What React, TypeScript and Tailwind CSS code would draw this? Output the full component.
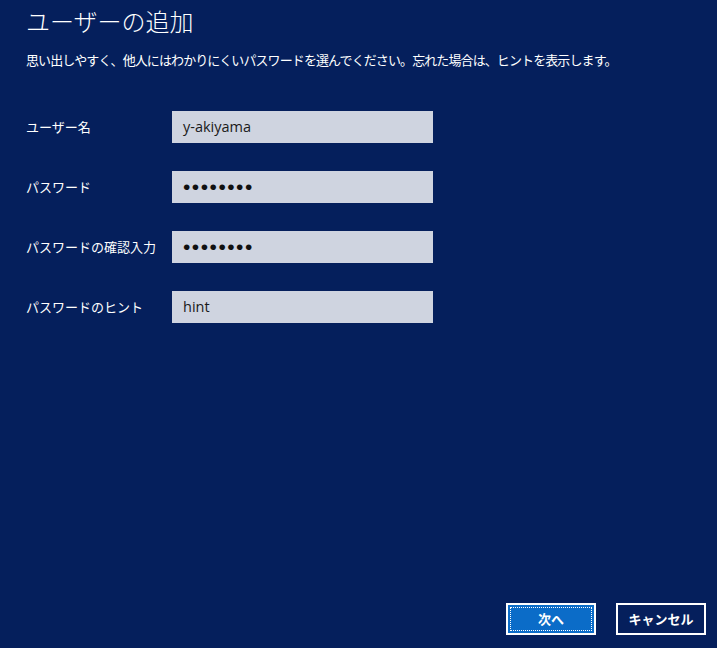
import React from 'react';

const fields = [
    { label: 'ユーザー名', value: 'y-akiyama', secret: false },
    { label: 'パスワード', value: 'password', secret: true },
    { label: 'パスワードの確認入力', value: 'password', secret: true },
    { label: 'パスワードのヒント', value: 'hint', secret: false },
];

const jp = "font-['Meiryo_UI','Noto_Sans_CJK_JP',sans-serif]";

function Field({ label, value, secret }: { label: string; value: string; secret: boolean }) {
    return (
        <div className="flex items-center h-8">
            <span className={`w-[146px] shrink-0 text-[13px] text-white ${jp}`}>{label}</span>
            <div className="w-[261px] h-8 bg-[#cfd4e0] flex items-center pl-[11px]">
                {secret ? (
                    <span className="text-[21px] leading-none tracking-[1.5px] text-[#111] font-['Liberation_Sans',sans-serif] -mt-[1px]">
                        {'•'.repeat(value.length)}
                    </span>
                ) : (
                    <span className="text-[14.5px] text-[#1a1a1a] font-['Open_Sans',sans-serif]">{value}</span>
                )}
            </div>
        </div>
    );
}

export default function App() {
    return (
        <div className={`w-[717px] h-[648px] bg-[#051f5c] flex flex-col ${jp}`}>
            {/* Header */}
            <div className="pl-[26px] pt-[4px]">
                <h1 className="text-[24px] leading-[34px] font-light text-white">ユーザーの追加</h1>
                <p className="mt-[13px] text-[13px] leading-[18px] tracking-[-0.9px] text-white">
                    思い出しやすく、他人にはわかりにくいパスワードを選んでください。忘れた場合は、ヒントを表示します。
                </p>
            </div>

            {/* Form */}
            <div className="pl-[26px] mt-[42px] flex flex-col gap-[28px]">
                {fields.map((f) => (
                    <Field key={f.label} {...f} />
                ))}
            </div>

            {/* Footer buttons */}
            <div className="mt-auto flex justify-end gap-5 pr-[11px] pb-[13px]">
                <button className="w-[90px] h-8 border-2 border-white bg-[#0b6cc8] p-[2px]">
                    <span className="flex items-center justify-center w-full h-full border border-dotted border-white text-[13px] font-bold text-white">
                        次へ
                    </span>
                </button>
                <button className="w-[90px] h-8 border-2 border-white bg-[#051f5c] text-[13px] font-bold text-white">
                    キャンセル
                </button>
            </div>
        </div>
    );
}
